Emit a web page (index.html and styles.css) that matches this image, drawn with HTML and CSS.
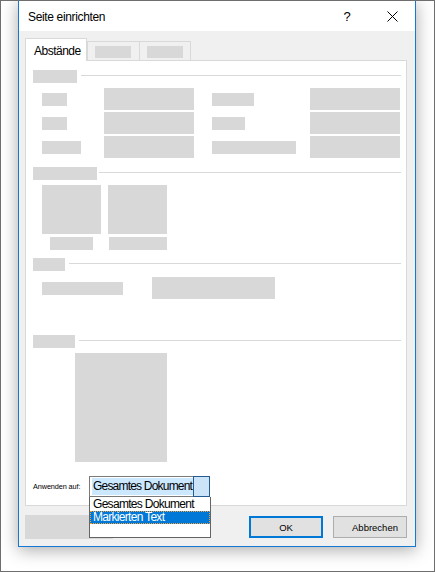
FILE: index.html
```html
<!DOCTYPE html>
<html lang="de">
<head>
<meta charset="utf-8">
<title>Seite einrichten</title>
<link rel="stylesheet" href="styles.css">
</head>
<body>
<div class="screen">
  <div class="window">
    <div class="titlebar">
      <span class="title">Seite einrichten</span>
      <span class="cap help">?</span>
      <span class="cap close">
        <svg width="11" height="11" viewBox="0 0 11 11"><path d="M0.5 0.5 L10.5 10.5 M10.5 0.5 L0.5 10.5" stroke="#000" stroke-width="1" fill="none"/></svg>
      </span>
    </div>
    <div class="body">
      <div class="tabs">
        <div class="tab active">Abstände</div>
        <div class="tab inactive"><span class="ph tab-ph"></span></div>
        <div class="tab inactive third"><span class="ph tab-ph"></span></div>
      </div>
      <div class="panel">
        <section class="group">
          <div class="ghead"><span class="ph h1"></span><span class="rule"></span></div>
          <div class="margins">
            <span class="ph lbl l1a"></span><span class="ph field"></span><span></span><span class="ph lbl l1d"></span><span class="ph field"></span>
            <span class="ph lbl l2a"></span><span class="ph field"></span><span></span><span class="ph lbl l2d"></span><span class="ph field"></span>
            <span class="ph lbl l3a"></span><span class="ph field"></span><span></span><span class="ph lbl l3d"></span><span class="ph field"></span>
          </div>
        </section>
        <section class="group g2">
          <div class="ghead"><span class="ph h2"></span><span class="rule r2"></span></div>
          <div class="orient">
            <div class="fig"><span class="ph figbox"></span><span class="ph lbl f1"></span></div>
            <div class="fig"><span class="ph figbox"></span><span class="ph lbl f2"></span></div>
          </div>
        </section>
        <section class="group g3">
          <div class="ghead"><span class="ph h3"></span><span class="rule"></span></div>
          <div class="pages">
            <span class="ph lbl p1"></span><span class="ph pfield"></span>
          </div>
        </section>
        <section class="group g4">
          <div class="ghead"><span class="ph h4"></span><span class="rule"></span></div>
          <span class="ph preview"></span>
        </section>
        <div class="apply">
          <span class="apply-label">Anwenden auf:</span>
          <div class="combo">
            <span class="combo-text"><span class="sel">Gesamtes Dokument</span></span>
            <span class="combo-btn"></span>
            <ul class="droplist">
              <li class="item">Gesamtes Dokument</li>
              <li class="item hot"><span class="focus">Markierten Text</span></li>
              <li class="item"></li>
            </ul>
          </div>
        </div>
      </div>
      <div class="buttons">
        <span class="ph btn-ph"></span>
        <button class="btn ok">OK</button>
        <button class="btn cancel">Abbrechen</button>
      </div>
    </div>
  </div>
</div>
</body>
</html>
```
FILE: styles.css
```css
* { box-sizing: border-box; }
html, body { margin: 0; padding: 0; background: #fff; }
body { font-family: "Liberation Sans", Arial, sans-serif; color: #000; }

.screen {
  width: 435px;
  height: 572px;
  border: 1px solid #6e6e6e;
  background: #fff;
  overflow: hidden;
}

.window {
  margin: -1px 0 0 17px;
  width: 398px;
  height: 547px;
  border: 1px solid #1479d3;
  background: #f0f0f0;
  box-shadow: 0 3px 16px rgba(0,0,0,0.34);
  display: flex;
  flex-direction: column;
}

.titlebar {
  height: 30px;
  background: #fff;
  display: flex;
  align-items: center;
  flex: none;
}
.title {
  margin-left: 9px;
  font-size: 12px;
  letter-spacing: -0.35px;
  flex: 1;
  padding-top: 1px;
}
.cap {
  width: 46px;
  height: 30px;
  display: flex;
  align-items: center;
  justify-content: center;
}
.help { font-size: 13px; padding-left: 2px; padding-top: 1px; }
.close svg { display: block; margin-left: 1px; }

.body {
  flex: 1;
  padding: 7px 8px 0 6px;
  display: flex;
  flex-direction: column;
}

.ph { display: block; background: #d8d8d8; }

.tabs {
  height: 22px;
  display: flex;
  align-items: flex-end;
  flex: none;
}
.tab {
  border: 1px solid #d9d9d9;
  border-bottom: 0;
}
.tab.active {
  position: relative;
  z-index: 1;
  width: 62px;
  height: 23px;
  margin-bottom: -1px;
  background: #fff;
  font-size: 12px;
  letter-spacing: -0.5px;
  padding: 5px 0 0 8px;
  line-height: 14px;
}
.tab.inactive {
  width: 53px;
  height: 19px;
  padding: 4px 0 0 7px;
  background: #f0f0f0;
}
.tab.third { width: 51px; border-left: 0; }
.tab-ph { width: 36px; height: 12px; }

.panel {
  height: 446px;
  border: 1px solid #d9d9d9;
  background: #fff;
  padding: 9px 5px 0 7px;
  flex: none;
}

.ghead { display: flex; align-items: flex-start; height: 13px; }
.ghead .ph { height: 13px; }
.rule { flex: 1; height: 1px; background: #d9d9d9; margin: 5px 0 0 4px; }
.rule.r2 { margin-left: 2px; }
.h1 { width: 44px; }
.h2 { width: 64px; }
.h3 { width: 32px; }
.h4 { width: 42px; }

.lbl { height: 13px; }

.margins {
  margin: 5px 0 0 9px;
  display: grid;
  grid-template-columns: 62px 90px 18px 98px 90px;
  grid-template-rows: 22px 22px 22px;
  row-gap: 2px;
  align-items: center;
}
.field { height: 22px; }
.l1a { width: 25px; }
.l2a { width: 25px; }
.l3a { width: 39px; }
.l1d { width: 42px; }
.l2d { width: 33px; }
.l3d { width: 84px; }

.g2 { margin-top: 9px; }
.orient { display: flex; gap: 7px; margin: 5px 0 0 9px; }
.fig { display: flex; flex-direction: column; align-items: center; width: 59px; }
.figbox { width: 59px; height: 49px; }
.fig .lbl { margin-top: 3px; }
.f1 { width: 43px; }
.f2 { width: 58px; }

.g3 { margin-top: 8px; }
.pages { display: flex; align-items: center; margin: 6px 0 0 9px; }
.p1 { width: 81px; }
.pfield { width: 123px; height: 22px; margin-left: 29px; }

.g4 { margin-top: 36px; }
.preview { width: 92px; height: 109px; margin: 5px 0 0 42px; }

.apply { display: flex; align-items: center; margin-top: 14px; height: 21px; }
.apply-label { width: 56px; font-size: 7.3px; letter-spacing: -0.1px; }

.combo {
  position: relative;
  width: 121px;
  height: 21px;
  border: 1px solid #7a7a7a;
  background: #fff;
  display: flex;
}
.combo-text {
  flex: 1;
  overflow: hidden;
  padding: 1px 0 1px 2px;
}
.sel {
  display: block;
  height: 17px;
  background: #cce8ff;
  font-size: 12px;
  letter-spacing: -0.8px;
  line-height: 17px;
  white-space: nowrap;
  padding-left: 1px;
}
.combo-btn {
  width: 17px;
  margin: -1px -1px -1px 0;
  border: 1px solid #255b92;
  background: #cce4f7;
}
.droplist {
  position: absolute;
  top: 20px;
  left: -1px;
  width: 122px;
  height: 41px;
  margin: 0;
  padding: 0;
  list-style: none;
  border: 1px solid #646464;
  border-top: 0;
  background: #fff;
  z-index: 5;
}
.item {
  height: 13px;
  line-height: 13px;
  font-size: 12px;
  letter-spacing: -0.7px;
  padding-left: 3px;
  white-space: nowrap;
}
.item:first-child { margin-top: 1px; }
.item.hot {
  background: #0078d7;
  color: #fff;
  padding: 0;
}
.focus {
  display: block;
  height: 13px;
  line-height: 11px;
  border: 1px dotted #f5a03a;
  padding-left: 2px;
}

.buttons {
  display: flex;
  align-items: center;
  height: 24px;
  margin-top: 9px;
  flex: none;
}
.btn-ph { width: 88px; height: 24px; }
.btn {
  width: 74px;
  height: 22px;
  background: #e1e1e1;
  font-family: "Liberation Sans", Arial, sans-serif;
  font-size: 9.5px;
  color: #000;
  padding: 0;
  margin: 0;
}
.btn.ok { margin-left: auto; border: 2px solid #0078d7; }
.btn.cancel { margin-left: 10px; border: 1px solid #adadad; padding-left: 10px; }
```
